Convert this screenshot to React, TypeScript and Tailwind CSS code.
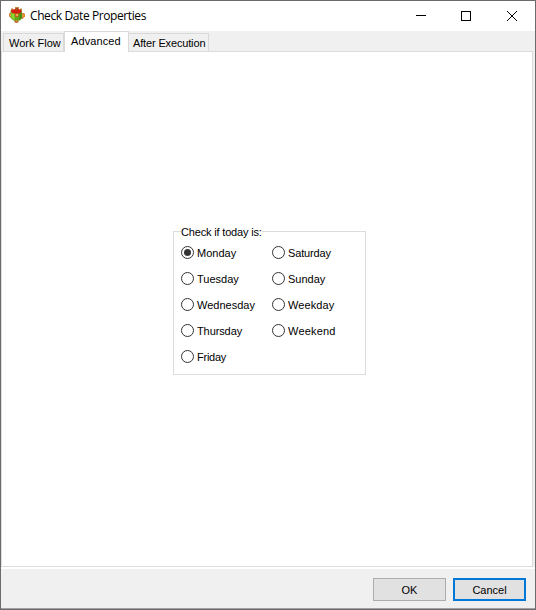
import { useState } from 'react';

type Day = { name: string; spacing: string };

const leftDays: Day[] = [
  { name: 'Monday', spacing: 'tracking-normal' },
  { name: 'Tuesday', spacing: 'tracking-normal' },
  { name: 'Wednesday', spacing: 'tracking-normal' },
  { name: 'Thursday', spacing: 'tracking-[-0.1px]' },
  { name: 'Friday', spacing: 'tracking-[-0.25px]' },
];

const rightDays: Day[] = [
  { name: 'Saturday', spacing: 'tracking-[-0.15px]' },
  { name: 'Sunday', spacing: 'tracking-normal' },
  { name: 'Weekday', spacing: 'tracking-[0.1px]' },
  { name: 'Weekend', spacing: 'tracking-[0.2px]' },
];

function DayColumn({ days, value, onChange }: { days: Day[]; value: string; onChange: (d: string) => void }) {
  return (
    <div className="flex flex-col gap-[13px]">
      {days.map((d) => (
        <button key={d.name} type="button" onClick={() => onChange(d.name)} className="flex h-[13px] items-center gap-[3px]">
          <span className="flex size-[13px] shrink-0 items-center justify-center rounded-full border border-[#333333] bg-white">
            {value === d.name && <span className="size-[7px] rounded-full bg-[#333333]" />}
          </span>
          <span className={`whitespace-nowrap pt-[2px] leading-[13px] ${d.spacing}`}>{d.name}</span>
        </button>
      ))}
    </div>
  );
}

function AppIcon() {
  return (
    <svg className="mb-[2px]" width="16" height="16" viewBox="0 0 16 16">
      <path d="M6 0h4v3H6zM2 1.500h2v2H2zM11 1.500h2v2h-2z" fill="#c08a3c" />
      <path d="M0 6.500L2 5.500v5L0 9.500zM12.500 6h2.500l1 1v3h-1l-1 2h-1.500z" fill="#d98232" />
      <path d="M5.500 13h4v2.500h-1L8 16H7l-.5-.5h-1z" fill="#b5651d" />
      <path d="M1.500 3.500h11.500v7.500l-2 2.500H4.500L1.500 11z" fill="#5fa81c" />
      <path d="M2.500 5h3v7.500h-1l-2-2z" fill="#8fd330" />
      <path d="M10.500 6h2v5l-2 2z" fill="#43820f" />
      <ellipse cx="7.300" cy="4.300" rx="5.300" ry="2.400" fill="#d81c10" />
      <path d="M6.500 1h2.500v2.500H6.500z" fill="#a84b18" />
      <path d="M6 6.500h3.500V10h-3.500z" fill="#c2601c" />
      <path d="M7 7h2v2H7zM1 7h1v2H1zM13.500 7.500h1v2h-1zM7 13.500h1.500v1H7z" fill="#f0a850" />
    </svg>
  );
}

export default function App() {
  const [day, setDay] = useState('Monday');
  return (
    <div className="flex h-[610px] w-[536px] flex-col border border-[#6b6b6b] bg-[#f0f0f0] font-['Liberation_Sans',Arial,sans-serif] text-[11px] text-black">
      <header className="flex h-[30px] shrink-0 items-center bg-white pl-2">
        <AppIcon />
        <span className="ml-[5px] whitespace-nowrap font-['Open_Sans','Noto_Sans',sans-serif] text-[12px] leading-4 tracking-[-0.4px]">Check Date Properties</span>
        <svg className="ml-auto mr-[17px]" width="102" height="12" viewBox="0 0 102 12" fill="none" stroke="black">
          <path d="M0 5.500h10M45.500 1.500h9v9h-9z" shapeRendering="crispEdges" />
          <path d="M91 1l10 10M101 1l-10 10" />
        </svg>
      </header>

      <nav className="flex h-[20px] shrink-0 items-end pl-[2px]">
        <div className="flex h-[18px] w-[61px] items-center whitespace-nowrap border border-b-0 border-[#d9d9d9] pl-[5px] pt-[2px]">Work Flow</div>
        <div className="relative z-10 -mb-px flex h-[21px] w-[65px] items-center whitespace-nowrap border border-b-0 border-[#d9d9d9] bg-white pb-px pl-[6px] tracking-[0.1px]">Advanced</div>
        <div className="flex h-[18px] w-[80px] items-center whitespace-nowrap border border-b-0 border-l-0 border-[#d9d9d9] pl-[4px] pt-[2px] tracking-[-0.15px]">After Execution</div>
      </nav>

      <main className="mr-[2px] h-[516px] shrink-0 border border-[#dcdcdc] bg-white pl-[171px] pt-[173px]">
        <fieldset className="h-[150px] w-[193px] min-w-0 border border-[#dcdcdc] px-[7px]">
          <legend className="h-[13px] whitespace-nowrap pt-px leading-[13px] tracking-[-0.17px]">Check if today is:</legend>
          <div className="grid grid-cols-[91px_1fr] items-start pt-[8px]">
            <DayColumn days={leftDays} value={day} onChange={setDay} />
            <DayColumn days={rightDays} value={day} onChange={setDay} />
          </div>
        </fieldset>
      </main>

      <footer className="flex min-h-0 flex-1 items-start justify-end gap-[7px] border-b border-t-2 border-b-[#a0a0a0] border-t-white pr-[9px] pt-[9px]">
        <button type="button" className="h-[23px] w-[73px] border border-[#adadad] bg-[#e1e1e1] pt-[2px]">OK</button>
        <button type="button" className="h-[23px] w-[73px] border-2 border-[#0078d7] bg-[#e1e1e1] pt-[2px]">Cancel</button>
      </footer>
    </div>
  );
}
